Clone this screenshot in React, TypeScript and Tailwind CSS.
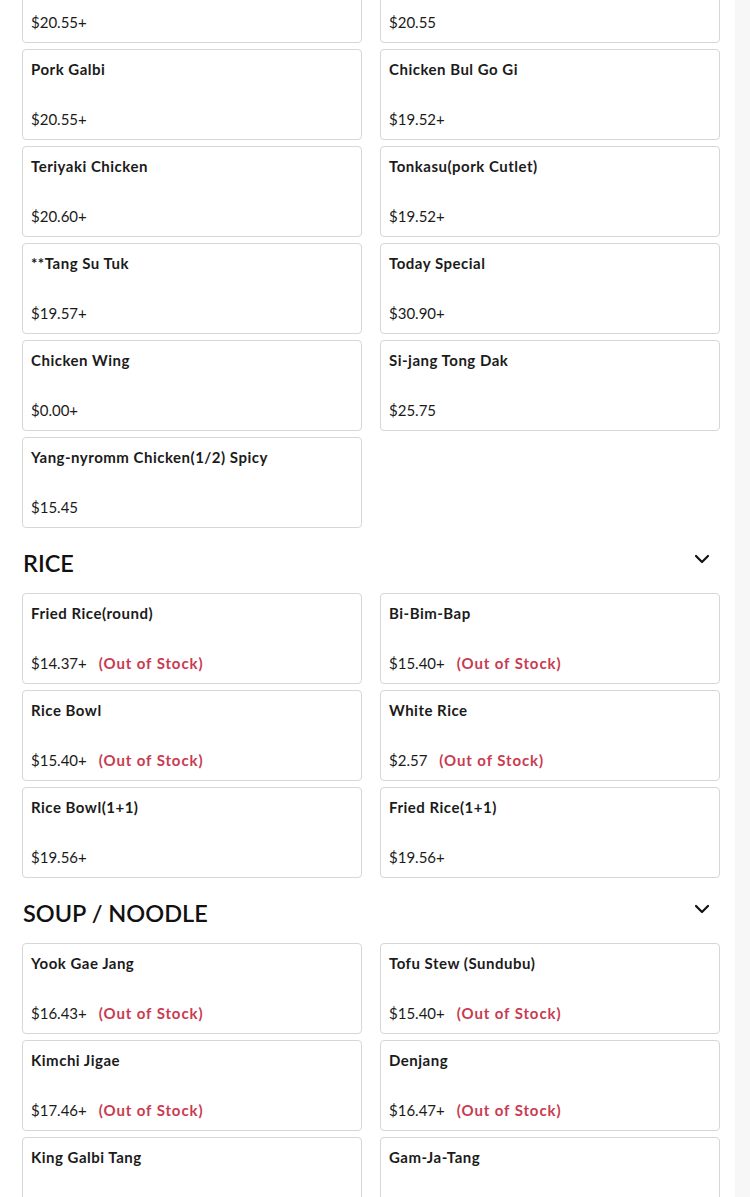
import { ChevronDown } from "lucide-react";

type Item = { name: string; price: string; out?: boolean };

// top section is scrolled: first row sits partly above the viewport
const mains: Item[] = [
  { name: "Beef Galbi", price: "$20.55+" },
  { name: "Beef Bul Go Gi", price: "$20.55" },
  { name: "Pork Galbi", price: "$20.55+" },
  { name: "Chicken Bul Go Gi", price: "$19.52+" },
  { name: "Teriyaki Chicken", price: "$20.60+" },
  { name: "Tonkasu(pork Cutlet)", price: "$19.52+" },
  { name: "**Tang Su Tuk", price: "$19.57+" },
  { name: "Today Special", price: "$30.90+" },
  { name: "Chicken Wing", price: "$0.00+" },
  { name: "Si-jang Tong Dak", price: "$25.75" },
  { name: "Yang-nyromm Chicken(1/2) Spicy", price: "$15.45" },
];

const rice: Item[] = [
  { name: "Fried Rice(round)", price: "$14.37+", out: true },
  { name: "Bi-Bim-Bap", price: "$15.40+", out: true },
  { name: "Rice Bowl", price: "$15.40+", out: true },
  { name: "White Rice", price: "$2.57", out: true },
  { name: "Rice Bowl(1+1)", price: "$19.56+" },
  { name: "Fried Rice(1+1)", price: "$19.56+" },
];

const soup: Item[] = [
  { name: "Yook Gae Jang", price: "$16.43+", out: true },
  { name: "Tofu Stew (Sundubu)", price: "$15.40+", out: true },
  { name: "Kimchi Jigae", price: "$17.46+", out: true },
  { name: "Denjang", price: "$16.47+", out: true },
  { name: "King Galbi Tang", price: "$17.46+", out: true },
  { name: "Gam-Ja-Tang", price: "$16.47+", out: true },
];

function MenuCard({ item }: { item: Item }) {
  return (
    <div className="flex h-[91px] flex-col justify-between rounded-[4px] border border-[#d6d6d6] bg-white px-[8px] pt-[9px] pb-[10px]">
      <div className="text-[15px] leading-[20px] font-bold tracking-[0.5px] text-[#1b1b1b]">{item.name}</div>
      <div className="flex items-center text-[15px] leading-[20px] text-[#1b1b1b]">
        <span>{item.price}</span>
        {item.out && (
          <span className="ml-[12px] font-bold tracking-[0.9px] text-[#c93b50]">(Out of Stock)</span>
        )}
      </div>
    </div>
  );
}

function Section({ title, items }: { title: string; items: Item[] }) {
  return (
    <section className="mt-[19px]">
      <div className="mb-[14px] flex items-start justify-between pl-[1px]">
        <h2 className="text-[23.5px] leading-[32px] font-semibold text-[#111]">{title}</h2>
        <ChevronDown size={24} strokeWidth={2.2} className="mr-[6px] text-[#111]" />
      </div>
      <div className="grid grid-cols-2 gap-x-[18px] gap-y-[6px]">
        {items.map((it) => (
          <MenuCard key={it.name} item={it} />
        ))}
      </div>
    </section>
  );
}

export default function App() {
  return (
    <div
      className="flex h-[1197px] w-[750px] overflow-hidden bg-white"
      style={{ fontFamily: "Lato, 'Noto Sans', sans-serif" }}
    >
      <main className="w-[735px] pl-[22px] pr-[15px]">
        <div className="-mt-[48px] grid grid-cols-2 gap-x-[18px] gap-y-[6px]">
          {mains.map((it) => (
            <MenuCard key={it.name} item={it} />
          ))}
        </div>
        <Section title="RICE" items={rice} />
        <Section title="SOUP / NOODLE" items={soup} />
      </main>
      <aside className="w-[15px] bg-[#f7f7f7]" />
    </div>
  );
}
